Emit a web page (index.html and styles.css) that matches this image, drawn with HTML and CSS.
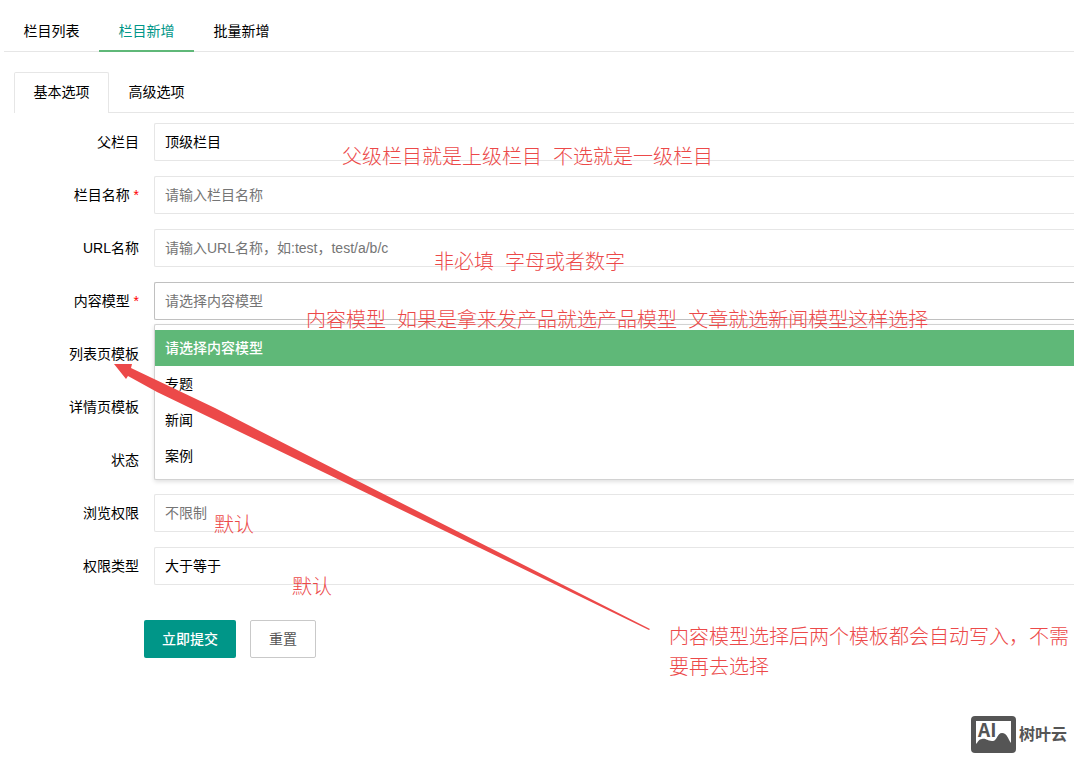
FILE: index.html
```html
<!DOCTYPE html>
<html lang="zh-CN">
<head>
<meta charset="utf-8">
<meta name="viewport" content="width=device-width, initial-scale=1">
<title>栏目新增</title>
<link rel="stylesheet" href="styles.css">
</head>
<body>
<nav class="tabs">
  <a class="tab" href="#list">栏目列表</a>
  <a class="tab tab-active" href="#add">栏目新增</a>
  <a class="tab" href="#batch">批量新增</a>
</nav>
<main class="panel">
  <div class="card-tabs">
    <button type="button" class="card-tab card-tab-active">基本选项</button>
    <button type="button" class="card-tab">高级选项</button>
  </div>
  <form class="form">
    <div class="row">
      <label class="label" for="parent">父栏目</label>
      <select class="field" id="parent"><option>顶级栏目</option></select>
    </div>
    <div class="row">
      <label class="label" for="name">栏目名称 <span class="required">*</span></label>
      <input class="field" id="name" type="text" placeholder="请输入栏目名称">
    </div>
    <div class="row">
      <label class="label" for="url">URL名称</label>
      <input class="field" id="url" type="text" placeholder="请输入URL名称，如:test，test/a/b/c">
    </div>
    <div class="row row-open">
      <label class="label" for="model">内容模型 <span class="required">*</span></label>
      <select class="field field-muted field-focus" id="model"><option>请选择内容模型</option></select>
      <ul class="menu" role="listbox" aria-label="内容模型">
        <li class="option option-selected" role="option" aria-selected="true">请选择内容模型</li>
        <li class="option" role="option">专题</li>
        <li class="option" role="option">新闻</li>
        <li class="option" role="option">案例</li>
      </ul>
    </div>
    <div class="row">
      <label class="label" for="list-tpl">列表页模板</label>
      <input class="field" id="list-tpl" type="text">
    </div>
    <div class="row">
      <label class="label" for="detail-tpl">详情页模板</label>
      <input class="field" id="detail-tpl" type="text">
    </div>
    <div class="row">
      <label class="label" for="status">状态</label>
      <input class="status" id="status" type="checkbox">
    </div>
    <div class="row">
      <label class="label" for="access">浏览权限</label>
      <select class="field field-muted" id="access"><option>不限制</option></select>
    </div>
    <div class="row">
      <label class="label" for="access-type">权限类型</label>
      <select class="field" id="access-type"><option>大于等于</option></select>
    </div>
    <div class="actions">
      <button type="submit" class="button button-primary">立即提交</button>
      <button type="reset" class="button">重置</button>
    </div>
  </form>
</main>
<footer class="brand">
  <svg class="brand-icon" viewBox="0 0 45 37" aria-hidden="true">
    <rect x="0" y="0" width="45" height="37" rx="4" fill="#555"/>
    <path d="M5 5H40V27C37 23 36 17 31 17C26 17 26 26 21 25C16 25 15 22 11 23C8 23 7 26 5 28Z" fill="#fff"/>
    <text class="brand-ai" x="7" y="21">AI</text>
  </svg>
  <span>树叶云</span>
</footer>

<svg class="arrow" viewBox="0 0 536 266" aria-hidden="true">
  <path d="M0 0H18L17 4L101 44L236 113L536 265L535 266L236 121L43 28L14 12L12 15Z" fill="#ec4949"/>
</svg>
<p class="note note-parent">父级栏目就是上级栏目  不选就是一级栏目</p>
<p class="note note-url">非必填  字母或者数字</p>
<p class="note note-model">内容模型  如果是拿来发产品就选产品模型  文章就选新闻模型这样选择</p>
<p class="note note-access">默认</p>
<p class="note note-type">默认</p>
<p class="note note-template">内容模型选择后两个模板都会自动写入，不需要再去选择</p>
</body>
</html>
```
FILE: styles.css
```css
* { box-sizing: border-box; }

body {
  position: relative;
  margin: 0;
  padding: 11px 0 0 4px;
  background: #fff;
  color: #000;
  font: 14px/20px "Liberation Sans", "Noto Sans CJK SC", sans-serif;
}

button, input, select { font: inherit; color: inherit; }

.tabs { display: flex; border-bottom: 1px solid #e6e6e6; }
.tab {
  height: 41px;
  margin-bottom: -1px;
  padding: 0 19px;
  border-bottom: 2px solid transparent;
  line-height: 40px;
  min-width: 95px;
  text-align: center;
  color: #000;
  text-decoration: none;
}
.tab-active { color: #009688; border-bottom-color: #5fb878; }

.panel { padding: 20px 0 0 10px; }

.card-tabs { display: flex; border-bottom: 1px solid #e6e6e6; }
.card-tab {
  height: 41px;
  min-width: 95px;
  margin-bottom: -1px;
  padding: 0 18px 2px;
  border: 1px solid transparent;
  border-bottom: 0;
  border-radius: 2px 2px 0 0;
  background: none;
  line-height: 38px;
}
.card-tab-active { border-color: #e6e6e6; background: #fff; }

.form { display: flex; flex-direction: column; gap: 15px; padding-top: 10px; }
.row { display: grid; grid-template-columns: 140px 1fr; min-height: 38px; }
.row-open { position: relative; }
.label { padding: 9px 15px 9px 0; text-align: right; white-space: nowrap; }
.required { color: #f00; }

.field {
  appearance: none;
  width: 100%;
  height: 38px;
  padding: 0 10px;
  border: 1px solid #e6e6e6;
  border-right: 0;
  border-radius: 2px 0 0 2px;
  outline: 0;
  background: #fff;
}
.field::placeholder { color: #757575; opacity: 1; }
.field-muted { color: #757575; }
.field-focus { border-color: #c0c0c0; }
.status { align-self: center; margin: 0 10px; }

.menu {
  position: absolute;
  z-index: 1;
  top: 42px;
  left: 140px;
  right: 0;
  margin: 0;
  padding: 5px 0;
  border: 1px solid #d2d2d2;
  border-right: 0;
  border-radius: 2px 0 0 2px;
  background: #fff;
  box-shadow: 0 2px 4px rgba(0, 0, 0, .12);
  list-style: none;
}
.option { padding: 0 10px; line-height: 36px; }
.option-selected { background: #5fb878; color: #fff; font-weight: 500; }

.actions { display: flex; gap: 14px; padding: 20px 0 0 130px; }
.button {
  height: 38px;
  padding: 0 18px;
  border: 1px solid #c9c9c9;
  border-radius: 2px;
  background: #fff;
  color: #555;
}
.button-primary { border: 0; background: #009688; color: #fff; font-weight: 500; }

.brand {
  display: flex;
  align-items: center;
  justify-content: flex-end;
  gap: 3px;
  padding: 58px 7px 0 0;
  color: #555;
  font-size: 16px;
  font-weight: 700;
}
.brand-icon { width: 45px; height: 37px; }
.brand-ai { font: 700 19px "Noto Sans CJK SC", sans-serif; fill: #555; }

.arrow {
  position: absolute;
  z-index: 2;
  top: 364px;
  left: 114px;
  width: 536px;
  height: 266px;
  pointer-events: none;
}

.note {
  position: absolute;
  z-index: 2;
  margin: 0;
  color: #ec4949;
  font-size: 20px;
  font-weight: 300;
  line-height: 30px;
  white-space: pre;
  pointer-events: none;
}
.note-parent { top: 142px; left: 342px; }
.note-url { top: 247px; left: 434px; }
.note-model { top: 305px; left: 306px; }
.note-access { top: 510px; left: 214px; }
.note-type { top: 572px; left: 292px; }
.note-template { top: 622px; left: 669px; width: 401px; white-space: normal; }
```
